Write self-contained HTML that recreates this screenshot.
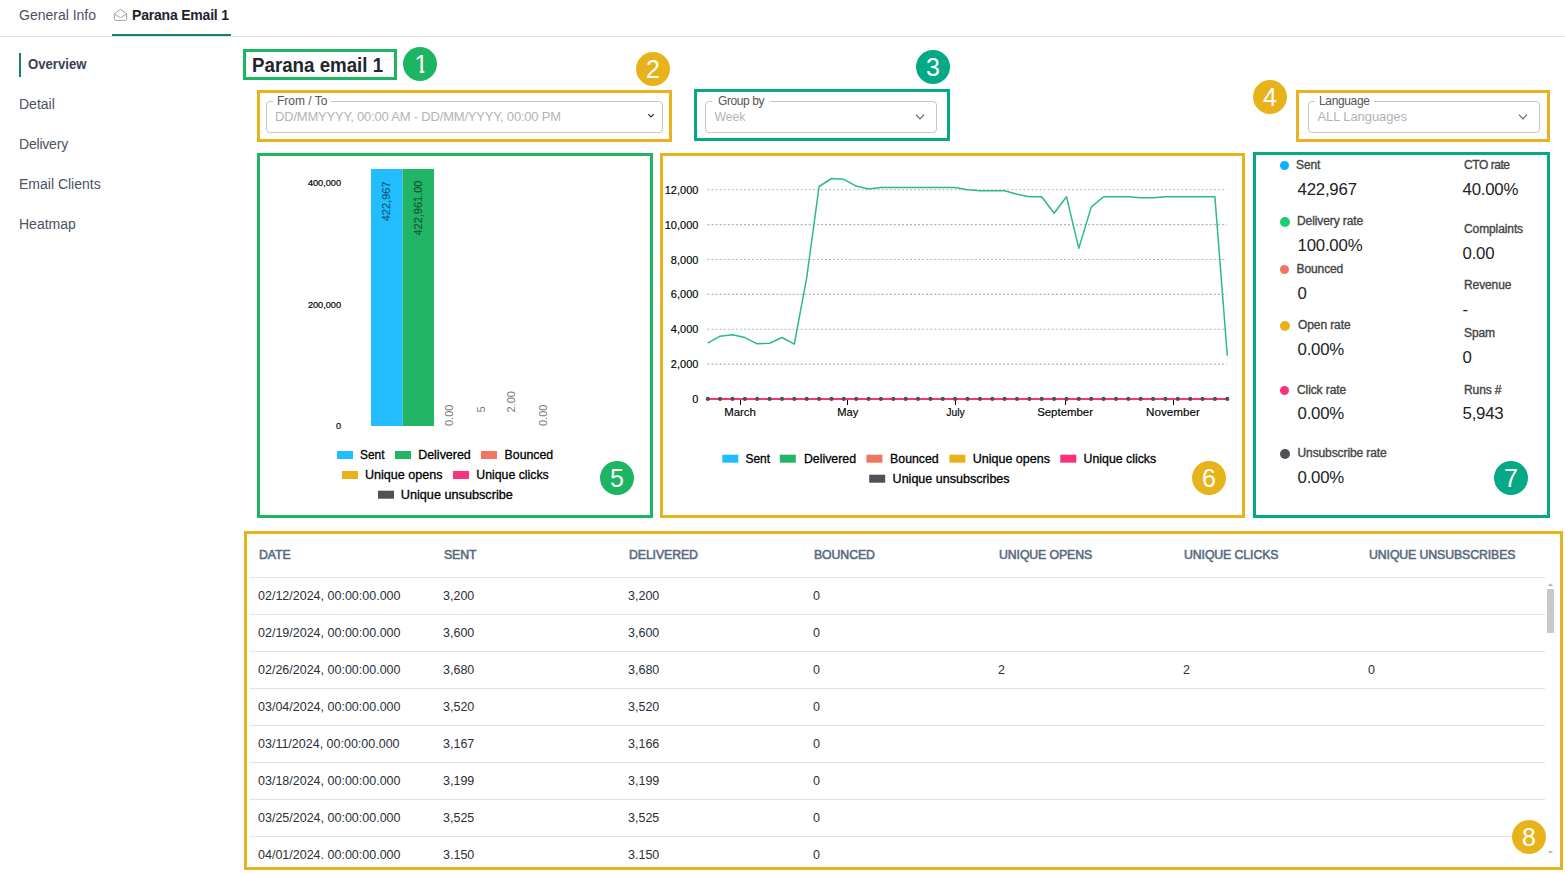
<!DOCTYPE html>
<html lang="en">
<head>
<meta charset="utf-8">
<title>Parana Email 1 - Overview</title>
<style>
*{box-sizing:border-box;margin:0;padding:0}
html,body{width:1565px;height:873px;overflow:hidden;background:#fff}
body{position:relative;font-family:"Liberation Sans",sans-serif;color:#333;font-size:14px}
.abs{position:absolute;white-space:nowrap}
.t{position:absolute;white-space:nowrap;line-height:20px;height:20px}
/* top tabs */
#tabline{left:0;top:36px;width:1565px;height:1px;background:#dfe3e8}
#tabul{left:112px;top:34px;width:119px;height:2px;background:#17806d}
.tab{font-size:14px;color:#4a5263}
/* nav */
.nav{font-size:14px;color:#4a5263;left:19px}
#navbar{left:19px;top:53px;width:2px;height:24px;background:#17806d}
/* annotation boxes */
.box{position:absolute;border:3px solid #000}
.g{border-color:#1cb561}
.y{border-color:#e8b31a}
.k{border-color:#05a985}
.circ{position:absolute;width:34px;height:34px;border-radius:50%;color:#fff;font-size:25px;line-height:34px;text-align:center}
.cg{background:#1cb561}.cy{background:#e8b31a}.ck{background:#05a985}
/* inputs */
.inp{position:absolute;border:1px solid #c6c6c6;border-radius:4px;height:32px;top:101px}
.lbl{position:absolute;top:94px;height:14px;line-height:14px;font-size:12px;color:#555;background:#fff;padding:0 4px;white-space:nowrap}
.ph{position:absolute;top:107px;height:20px;line-height:20px;font-size:13px;color:#b3b3b8;white-space:nowrap}
/* stats */
.dot{position:absolute;border-radius:50%}
.slab{position:absolute;white-space:nowrap;height:20px;line-height:20px;font-size:12px;color:#444;-webkit-text-stroke:0.35px #444;letter-spacing:-0.1px}
.sval{position:absolute;white-space:nowrap;height:24px;line-height:24px;font-size:16.8px;color:#222;letter-spacing:-0.2px}
/* table */
.th{position:absolute;white-space:nowrap;top:544.7px;height:20px;line-height:20px;font-size:12.3px;color:#586a80;-webkit-text-stroke:0.55px #586a80;letter-spacing:-0.1px}
.td{position:absolute;white-space:nowrap;height:20px;line-height:20px;font-size:12.5px;color:#2b2f36}
.hl{position:absolute;left:250px;width:1295px;height:1px;background:#dde3ea}
</style>
</head>
<body>

<!-- ===== top tabs ===== -->
<div class="t tab" style="left:19px;top:5px">General Info</div>
<svg class="abs" style="left:112.5px;top:8px" width="15" height="14" viewBox="0 0 15 14" fill="none" stroke="#9aa2b0" stroke-width="1" stroke-linejoin="round"><path d="M1.3 5.6 L7.5 1.4 L13.7 5.6 V11.2 Q13.7 12.4 12.5 12.4 H2.5 Q1.3 12.4 1.3 11.2 Z"/><path d="M1.6 6 L6.6 9.3 Q7.5 9.8 8.4 9.3 L13.4 6"/></svg>
<div class="t tab" style="left:132px;top:5px;font-weight:bold;color:#1e2230;letter-spacing:-0.2px">Parana Email 1</div>
<div class="abs" id="tabline"></div>
<div class="abs" id="tabul"></div>

<!-- ===== side nav ===== -->
<div class="abs" id="navbar"></div>
<div class="t nav" style="left:27.5px;top:54px;font-weight:bold;color:#3a4152;transform:scaleX(0.94);transform-origin:0 0">Overview</div>
<div class="t nav" style="top:94px">Detail</div>
<div class="t nav" style="top:134px;letter-spacing:-0.2px">Delivery</div>
<div class="t nav" style="top:174px">Email Clients</div>
<div class="t nav" style="top:214px">Heatmap</div>

<!-- ===== 1: title ===== -->
<div class="box g" style="left:243px;top:49px;width:154px;height:31px"></div>
<div class="t" style="left:252.4px;top:53.4px;height:24px;line-height:24px;font-size:20px;font-weight:bold;color:#23262e;transform:scaleX(0.936);transform-origin:0 0">Parana email 1</div>
<div class="circ cg" style="left:403px;top:47px"><span style="display:inline-block;position:relative;left:1.3px;clip-path:polygon(0 0,100% 0,100% 70%,72% 70%,72% 100%,40% 100%,40% 70%,0 70%)">1</span></div>

<!-- ===== 2: from / to ===== -->
<div class="box y" style="left:257px;top:90px;width:415px;height:52px"></div>
<div class="inp" style="left:266px;width:397px"></div>
<div class="lbl" style="left:273px">From / To</div>
<div class="ph" style="left:275px;letter-spacing:-0.2px">DD/MMYYYY, 00:00 AM - DD/MM/YYYY, 00:00 PM</div>
<svg class="abs" style="left:646px;top:112px" width="10" height="8" viewBox="0 0 10 8" fill="none" stroke="#333" stroke-width="1.15"><path d="M2.1 2.1 L5 5 L7.9 2.1"/></svg>
<div class="circ cy" style="left:636px;top:52px">2</div>

<!-- ===== 3: group by ===== -->
<div class="box k" style="left:694px;top:89px;width:256px;height:52px"></div>
<div class="inp" style="left:705px;width:232px"></div>
<div class="lbl" style="left:712px;padding:0 6px;letter-spacing:-0.4px">Group by</div>
<div class="ph" style="left:714.5px;font-size:12.2px">Week</div>
<svg class="abs" style="left:914px;top:112px" width="12" height="10" viewBox="0 0 12 10" fill="none" stroke="#626262" stroke-width="1.15"><path d="M2 2.6 L6 6.8 L10 2.6"/></svg>
<div class="circ ck" style="left:916px;top:50px">3</div>

<!-- ===== 4: language ===== -->
<div class="box y" style="left:1296px;top:90px;width:254px;height:52px"></div>
<div class="inp" style="left:1308px;width:232px"></div>
<div class="lbl" style="left:1315px;letter-spacing:-0.35px">Language</div>
<div class="ph" style="left:1317.5px;letter-spacing:-0.1px">ALL Languages</div>
<svg class="abs" style="left:1517px;top:112px" width="12" height="10" viewBox="0 0 12 10" fill="none" stroke="#626262" stroke-width="1.15"><path d="M2 2.6 L6 6.8 L10 2.6"/></svg>
<div class="circ cy" style="left:1253px;top:80px">4</div>

<!-- ===== 5: bar chart ===== -->
<div class="box g" style="left:257px;top:153px;width:396px;height:365px"></div>
<svg class="abs" style="left:260px;top:156px" width="390" height="359" viewBox="260 156 390 359" font-family='"Liberation Sans",sans-serif'>
<rect x="371" y="169" width="31.5" height="257" fill="#22bdff"/>
<rect x="402.5" y="169" width="31.5" height="257" fill="#22b566"/>
<text x="341.1" y="182.6" font-size="9.2" text-anchor="end" fill="#000" stroke="#000" stroke-width="0.2" dominant-baseline="central">400,000</text>
<text x="341.1" y="304.5" font-size="9.2" text-anchor="end" fill="#000" stroke="#000" stroke-width="0.2" dominant-baseline="central">200,000</text>
<text x="341.1" y="425.6" font-size="9.2" text-anchor="end" fill="#000" stroke="#000" stroke-width="0.2" dominant-baseline="central">0</text>
<text transform="translate(386,181.5) rotate(-90)" font-size="11" text-anchor="end" fill="#000" fill-opacity="0.5" stroke="#000" stroke-opacity="0.5" stroke-width="0.2" dominant-baseline="central">422,967</text>
<text transform="translate(417.5,180.5) rotate(-90)" font-size="11" text-anchor="end" fill="#000" fill-opacity="0.5" stroke="#000" stroke-opacity="0.5" stroke-width="0.2" dominant-baseline="central">422,961.00</text>
<text transform="translate(449.0,426.0) rotate(-90)" font-size="11" text-anchor="start" fill="#777" dominant-baseline="central">0.00</text>
<text transform="translate(481.0,412.5) rotate(-90)" font-size="11" text-anchor="start" fill="#777" dominant-baseline="central">5</text>
<text transform="translate(511.0,412.5) rotate(-90)" font-size="11" text-anchor="start" fill="#777" dominant-baseline="central">2.00</text>
<text transform="translate(543.3,426.0) rotate(-90)" font-size="11" text-anchor="start" fill="#777" dominant-baseline="central">0.00</text>
<rect x="337.0" y="451.0" width="16" height="8" fill="#22bdff"/>
<text x="360.0" y="455.0" font-size="12.5" fill="#000" stroke="#000" stroke-width="0.3" dominant-baseline="central" textLength="24.5" lengthAdjust="spacingAndGlyphs">Sent</text>
<rect x="395.0" y="451.0" width="16" height="8" fill="#22b566"/>
<text x="418.2" y="455.0" font-size="12.5" fill="#000" stroke="#000" stroke-width="0.3" dominant-baseline="central" textLength="52.6" lengthAdjust="spacingAndGlyphs">Delivered</text>
<rect x="481.0" y="451.0" width="16" height="8" fill="#f07563"/>
<text x="504.6" y="455.0" font-size="12.5" fill="#000" stroke="#000" stroke-width="0.3" dominant-baseline="central" textLength="48.6" lengthAdjust="spacingAndGlyphs">Bounced</text>
<rect x="342.0" y="471.0" width="16" height="8" fill="#e8b31a"/>
<text x="364.9" y="475.0" font-size="12.5" fill="#000" stroke="#000" stroke-width="0.3" dominant-baseline="central" textLength="77.6" lengthAdjust="spacingAndGlyphs">Unique opens</text>
<rect x="453.0" y="471.0" width="16" height="8" fill="#f8327f"/>
<text x="476.3" y="475.0" font-size="12.5" fill="#000" stroke="#000" stroke-width="0.3" dominant-baseline="central" textLength="72.4" lengthAdjust="spacingAndGlyphs">Unique clicks</text>
<rect x="378.0" y="490.7" width="16" height="8" fill="#4d5158"/>
<text x="400.8" y="494.7" font-size="12.5" fill="#000" stroke="#000" stroke-width="0.3" dominant-baseline="central" textLength="112.0" lengthAdjust="spacingAndGlyphs">Unique unsubscribe</text>
</svg>
<div class="circ cg" style="left:600px;top:461px">5</div>

<!-- ===== 6: line chart ===== -->
<div class="box y" style="left:660px;top:153px;width:585px;height:365px"></div>
<svg class="abs" style="left:663px;top:156px" width="579" height="359" viewBox="663 156 579 359" font-family='"Liberation Sans",sans-serif'>
<line x1="707.5" x2="1226.5" y1="364.13" y2="364.13" stroke="#b4b4b4" stroke-width="1.1" stroke-dasharray="2 2.05"/>
<line x1="707.5" x2="1226.5" y1="329.27" y2="329.27" stroke="#b4b4b4" stroke-width="1.1" stroke-dasharray="2 2.05"/>
<line x1="707.5" x2="1226.5" y1="294.40" y2="294.40" stroke="#b4b4b4" stroke-width="1.1" stroke-dasharray="2 2.05"/>
<line x1="707.5" x2="1226.5" y1="259.53" y2="259.53" stroke="#b4b4b4" stroke-width="1.1" stroke-dasharray="2 2.05"/>
<line x1="707.5" x2="1226.5" y1="224.67" y2="224.67" stroke="#b4b4b4" stroke-width="1.1" stroke-dasharray="2 2.05"/>
<line x1="707.5" x2="1226.5" y1="189.80" y2="189.80" stroke="#b4b4b4" stroke-width="1.1" stroke-dasharray="2 2.05"/>
<text x="698.4" y="399.0" font-size="11" text-anchor="end" fill="#000" stroke="#000" stroke-width="0.15" dominant-baseline="central">0</text>
<text x="698.4" y="364.1" font-size="11" text-anchor="end" fill="#000" stroke="#000" stroke-width="0.15" dominant-baseline="central">2,000</text>
<text x="698.4" y="329.3" font-size="11" text-anchor="end" fill="#000" stroke="#000" stroke-width="0.15" dominant-baseline="central">4,000</text>
<text x="698.4" y="294.4" font-size="11" text-anchor="end" fill="#000" stroke="#000" stroke-width="0.15" dominant-baseline="central">6,000</text>
<text x="698.4" y="259.5" font-size="11" text-anchor="end" fill="#000" stroke="#000" stroke-width="0.15" dominant-baseline="central">8,000</text>
<text x="698.4" y="224.7" font-size="11" text-anchor="end" fill="#000" stroke="#000" stroke-width="0.15" dominant-baseline="central">10,000</text>
<text x="698.4" y="189.8" font-size="11" text-anchor="end" fill="#000" stroke="#000" stroke-width="0.15" dominant-baseline="central">12,000</text>
<line x1="740.5" x2="740.5" y1="399" y2="405" stroke="#000" stroke-width="1"/>
<text x="740.0" y="412.2" font-size="11.3" text-anchor="middle" fill="#000" stroke="#000" stroke-width="0.15" dominant-baseline="central" textLength="31.7" lengthAdjust="spacingAndGlyphs">March</text>
<line x1="847.5" x2="847.5" y1="399" y2="405" stroke="#000" stroke-width="1"/>
<text x="847.8" y="412.2" font-size="11.3" text-anchor="middle" fill="#000" stroke="#000" stroke-width="0.15" dominant-baseline="central" textLength="21.1" lengthAdjust="spacingAndGlyphs">May</text>
<line x1="955.5" x2="955.5" y1="399" y2="405" stroke="#000" stroke-width="1"/>
<text x="955.5" y="412.2" font-size="11.3" text-anchor="middle" fill="#000" stroke="#000" stroke-width="0.15" dominant-baseline="central" textLength="18.6" lengthAdjust="spacingAndGlyphs">July</text>
<line x1="1065.5" x2="1065.5" y1="399" y2="405" stroke="#000" stroke-width="1"/>
<text x="1065.1" y="412.2" font-size="11.3" text-anchor="middle" fill="#000" stroke="#000" stroke-width="0.15" dominant-baseline="central" textLength="55.9" lengthAdjust="spacingAndGlyphs">September</text>
<line x1="1173.5" x2="1173.5" y1="399" y2="405" stroke="#000" stroke-width="1"/>
<text x="1172.9" y="412.2" font-size="11.3" text-anchor="middle" fill="#000" stroke="#000" stroke-width="0.15" dominant-baseline="central" textLength="53.8" lengthAdjust="spacingAndGlyphs">November</text>
<polyline points="707.8,343.2 720.1,336.2 732.5,334.8 744.9,337.6 757.2,343.8 769.6,343.2 782.0,337.5 794.3,344.1 806.7,277.7 819.1,186.5 831.5,178.5 843.8,179.3 856.2,186.1 868.6,188.9 880.9,187.6 893.3,187.6 905.7,187.6 918.0,187.6 930.4,187.6 942.8,187.6 955.1,187.6 967.5,189.8 979.9,190.8 992.3,190.8 1004.6,190.8 1017.0,194.2 1029.4,196.7 1041.7,196.7 1054.1,213.2 1066.5,196.7 1078.8,248.4 1091.2,207.1 1103.6,196.7 1116.0,196.7 1128.3,196.7 1140.7,197.7 1153.1,197.7 1165.4,196.7 1177.8,196.7 1190.2,196.7 1202.5,196.7 1214.9,196.7 1227.3,355.8" fill="none" stroke="#2bb98c" stroke-width="1.5" stroke-linejoin="round"/>
<line x1="707.8" x2="1227.3" y1="398.9" y2="398.9" stroke="#f8327f" stroke-width="2"/>
<circle cx="707.8" cy="398.9" r="2.1" fill="#4d5158"/>
<circle cx="720.1" cy="398.9" r="2.1" fill="#4d5158"/>
<circle cx="732.5" cy="398.9" r="2.1" fill="#4d5158"/>
<circle cx="744.9" cy="398.9" r="2.1" fill="#4d5158"/>
<circle cx="757.2" cy="398.9" r="2.1" fill="#4d5158"/>
<circle cx="769.6" cy="398.9" r="2.1" fill="#4d5158"/>
<circle cx="782.0" cy="398.9" r="2.1" fill="#4d5158"/>
<circle cx="794.3" cy="398.9" r="2.1" fill="#4d5158"/>
<circle cx="806.7" cy="398.9" r="2.1" fill="#4d5158"/>
<circle cx="819.1" cy="398.9" r="2.1" fill="#4d5158"/>
<circle cx="831.5" cy="398.9" r="2.1" fill="#4d5158"/>
<circle cx="843.8" cy="398.9" r="2.1" fill="#4d5158"/>
<circle cx="856.2" cy="398.9" r="2.1" fill="#4d5158"/>
<circle cx="868.6" cy="398.9" r="2.1" fill="#4d5158"/>
<circle cx="880.9" cy="398.9" r="2.1" fill="#4d5158"/>
<circle cx="893.3" cy="398.9" r="2.1" fill="#4d5158"/>
<circle cx="905.7" cy="398.9" r="2.1" fill="#4d5158"/>
<circle cx="918.0" cy="398.9" r="2.1" fill="#4d5158"/>
<circle cx="930.4" cy="398.9" r="2.1" fill="#4d5158"/>
<circle cx="942.8" cy="398.9" r="2.1" fill="#4d5158"/>
<circle cx="955.1" cy="398.9" r="2.1" fill="#4d5158"/>
<circle cx="967.5" cy="398.9" r="2.1" fill="#4d5158"/>
<circle cx="979.9" cy="398.9" r="2.1" fill="#4d5158"/>
<circle cx="992.3" cy="398.9" r="2.1" fill="#4d5158"/>
<circle cx="1004.6" cy="398.9" r="2.1" fill="#4d5158"/>
<circle cx="1017.0" cy="398.9" r="2.1" fill="#4d5158"/>
<circle cx="1029.4" cy="398.9" r="2.1" fill="#4d5158"/>
<circle cx="1041.7" cy="398.9" r="2.1" fill="#4d5158"/>
<circle cx="1054.1" cy="398.9" r="2.1" fill="#4d5158"/>
<circle cx="1066.5" cy="398.9" r="2.1" fill="#4d5158"/>
<circle cx="1078.8" cy="398.9" r="2.1" fill="#4d5158"/>
<circle cx="1091.2" cy="398.9" r="2.1" fill="#4d5158"/>
<circle cx="1103.6" cy="398.9" r="2.1" fill="#4d5158"/>
<circle cx="1116.0" cy="398.9" r="2.1" fill="#4d5158"/>
<circle cx="1128.3" cy="398.9" r="2.1" fill="#4d5158"/>
<circle cx="1140.7" cy="398.9" r="2.1" fill="#4d5158"/>
<circle cx="1153.1" cy="398.9" r="2.1" fill="#4d5158"/>
<circle cx="1165.4" cy="398.9" r="2.1" fill="#4d5158"/>
<circle cx="1177.8" cy="398.9" r="2.1" fill="#4d5158"/>
<circle cx="1190.2" cy="398.9" r="2.1" fill="#4d5158"/>
<circle cx="1202.5" cy="398.9" r="2.1" fill="#4d5158"/>
<circle cx="1214.9" cy="398.9" r="2.1" fill="#4d5158"/>
<circle cx="1227.3" cy="398.9" r="2.1" fill="#4d5158"/>
<rect x="722.3" y="454.7" width="16" height="8" fill="#22bdff"/>
<text x="745.5" y="458.7" font-size="12.5" fill="#000" stroke="#000" stroke-width="0.3" dominant-baseline="central" textLength="24.6" lengthAdjust="spacingAndGlyphs">Sent</text>
<rect x="779.8" y="454.7" width="16" height="8" fill="#22b566"/>
<text x="803.9" y="458.7" font-size="12.5" fill="#000" stroke="#000" stroke-width="0.3" dominant-baseline="central" textLength="52.2" lengthAdjust="spacingAndGlyphs">Delivered</text>
<rect x="866.4" y="454.7" width="16" height="8" fill="#f07563"/>
<text x="890.1" y="458.7" font-size="12.5" fill="#000" stroke="#000" stroke-width="0.3" dominant-baseline="central" textLength="48.6" lengthAdjust="spacingAndGlyphs">Bounced</text>
<rect x="949.4" y="454.7" width="16" height="8" fill="#e8b31a"/>
<text x="972.7" y="458.7" font-size="12.5" fill="#000" stroke="#000" stroke-width="0.3" dominant-baseline="central" textLength="77.3" lengthAdjust="spacingAndGlyphs">Unique opens</text>
<rect x="1060.3" y="454.7" width="16" height="8" fill="#f8327f"/>
<text x="1083.6" y="458.7" font-size="12.5" fill="#000" stroke="#000" stroke-width="0.3" dominant-baseline="central" textLength="72.6" lengthAdjust="spacingAndGlyphs">Unique clicks</text>
<rect x="869.2" y="474.7" width="16" height="8" fill="#4d5158"/>
<text x="892.6" y="478.7" font-size="12.5" fill="#000" stroke="#000" stroke-width="0.3" dominant-baseline="central" textLength="117.0" lengthAdjust="spacingAndGlyphs">Unique unsubscribes</text>
</svg>
<div class="circ cy" style="left:1192px;top:461px">6</div>

<!-- ===== 7: stats ===== -->
<div class="box k" style="left:1253px;top:152px;width:297px;height:366px"></div>
<div class="dot" style="left:1280.3px;top:161.3px;width:9px;height:9px;background:#05b4fe"></div>
<div class="slab" style="left:1296.0px;top:155.0px">Sent</div>
<div class="sval" style="left:1297.5px;top:178.0px">422,967</div>
<div class="dot" style="left:1279.8px;top:216.8px;width:10px;height:10px;background:#1ccf75"></div>
<div class="slab" style="left:1297.0px;top:211.0px">Delivery rate</div>
<div class="sval" style="left:1297.5px;top:234.0px">100.00%</div>
<div class="dot" style="left:1280.3px;top:265.3px;width:9px;height:9px;background:#f07563"></div>
<div class="slab" style="left:1296.5px;top:259.0px">Bounced</div>
<div class="sval" style="left:1297.5px;top:282.0px">0</div>
<div class="dot" style="left:1279.8px;top:320.8px;width:10px;height:10px;background:#e8b31a"></div>
<div class="slab" style="left:1298.0px;top:315.0px">Open rate</div>
<div class="sval" style="left:1297.5px;top:338.0px">0.00%</div>
<div class="dot" style="left:1280.3px;top:385.8px;width:9px;height:9px;background:#f8327f"></div>
<div class="slab" style="left:1297.0px;top:379.5px">Click rate</div>
<div class="sval" style="left:1297.5px;top:402.0px">0.00%</div>
<div class="dot" style="left:1279.8px;top:448.8px;width:10px;height:10px;background:#4d5158"></div>
<div class="slab" style="left:1297.5px;top:443.0px">Unsubscribe rate</div>
<div class="sval" style="left:1297.5px;top:466.0px">0.00%</div>
<div class="slab" style="left:1464px;top:155.0px;letter-spacing:-0.45px">CTO rate</div>
<div class="sval" style="left:1462.5px;top:178.0px">40.00%</div>
<div class="slab" style="left:1464px;top:219.0px">Complaints</div>
<div class="sval" style="left:1462.5px;top:242.0px">0.00</div>
<div class="slab" style="left:1464px;top:275.0px">Revenue</div>
<div class="sval" style="left:1462.5px;top:298.0px">-</div>
<div class="slab" style="left:1464px;top:323.0px">Spam</div>
<div class="sval" style="left:1462.5px;top:346.0px">0</div>
<div class="slab" style="left:1464px;top:379.5px">Runs #</div>
<div class="sval" style="left:1462.5px;top:402.0px">5,943</div>
<div class="circ ck" style="left:1494px;top:461px">7</div>

<!-- ===== 8: table ===== -->
<div class="box y" style="left:244px;top:531px;width:1319px;height:339px"></div>
<div class="th" style="left:259px">DATE</div>
<div class="th" style="left:444px">SENT</div>
<div class="th" style="left:629px">DELIVERED</div>
<div class="th" style="left:814px">BOUNCED</div>
<div class="th" style="left:999px">UNIQUE OPENS</div>
<div class="th" style="left:1184px">UNIQUE CLICKS</div>
<div class="th" style="left:1369px">UNIQUE UNSUBSCRIBES</div>
<div class="hl" style="top:577px"></div>
<div class="td" style="left:258px;top:585.5px">02/12/2024, 00:00:00.000</div>
<div class="td" style="left:443px;top:585.5px">3,200</div>
<div class="td" style="left:628px;top:585.5px">3,200</div>
<div class="td" style="left:813px;top:585.5px">0</div>
<div class="hl" style="top:614px"></div>
<div class="td" style="left:258px;top:622.5px">02/19/2024, 00:00:00.000</div>
<div class="td" style="left:443px;top:622.5px">3,600</div>
<div class="td" style="left:628px;top:622.5px">3,600</div>
<div class="td" style="left:813px;top:622.5px">0</div>
<div class="hl" style="top:651px"></div>
<div class="td" style="left:258px;top:659.5px">02/26/2024, 00:00:00.000</div>
<div class="td" style="left:443px;top:659.5px">3,680</div>
<div class="td" style="left:628px;top:659.5px">3,680</div>
<div class="td" style="left:813px;top:659.5px">0</div>
<div class="td" style="left:998px;top:659.5px">2</div>
<div class="td" style="left:1183px;top:659.5px">2</div>
<div class="td" style="left:1368px;top:659.5px">0</div>
<div class="hl" style="top:688px"></div>
<div class="td" style="left:258px;top:696.5px">03/04/2024, 00:00:00.000</div>
<div class="td" style="left:443px;top:696.5px">3,520</div>
<div class="td" style="left:628px;top:696.5px">3,520</div>
<div class="td" style="left:813px;top:696.5px">0</div>
<div class="hl" style="top:725px"></div>
<div class="td" style="left:258px;top:733.5px">03/11/2024, 00:00:00.000</div>
<div class="td" style="left:443px;top:733.5px">3,167</div>
<div class="td" style="left:628px;top:733.5px">3,166</div>
<div class="td" style="left:813px;top:733.5px">0</div>
<div class="hl" style="top:762px"></div>
<div class="td" style="left:258px;top:770.5px">03/18/2024, 00:00:00.000</div>
<div class="td" style="left:443px;top:770.5px">3,199</div>
<div class="td" style="left:628px;top:770.5px">3,199</div>
<div class="td" style="left:813px;top:770.5px">0</div>
<div class="hl" style="top:799px"></div>
<div class="td" style="left:258px;top:807.5px">03/25/2024, 00:00:00.000</div>
<div class="td" style="left:443px;top:807.5px">3,525</div>
<div class="td" style="left:628px;top:807.5px">3,525</div>
<div class="td" style="left:813px;top:807.5px">0</div>
<div class="hl" style="top:836px"></div>
<div class="td" style="left:258px;top:844.5px">04/01/2024, 00:00:00.000</div>
<div class="td" style="left:443px;top:844.5px">3,150</div>
<div class="td" style="left:628px;top:844.5px">3,150</div>
<div class="td" style="left:813px;top:844.5px">0</div>
<div class="abs" style="left:247px;top:859px;width:1298px;height:8px;background:#fff"></div>
<div class="abs" style="left:1547px;top:589px;width:7px;height:44px;background:#c9c9c9"></div>
<svg class="abs" style="left:1547px;top:582px" width="7" height="5" viewBox="0 0 7 5"><path d="M0.8 4 L3.5 1.2 L6.2 4 Z" fill="#b5b5b5"/></svg>
<svg class="abs" style="left:1547px;top:850px" width="7" height="5" viewBox="0 0 7 5"><path d="M0.8 1 L3.5 3.8 L6.2 1 Z" fill="#b5b5b5"/></svg>
<div class="circ cy" style="left:1512px;top:820px">8</div>

</body>
</html>
